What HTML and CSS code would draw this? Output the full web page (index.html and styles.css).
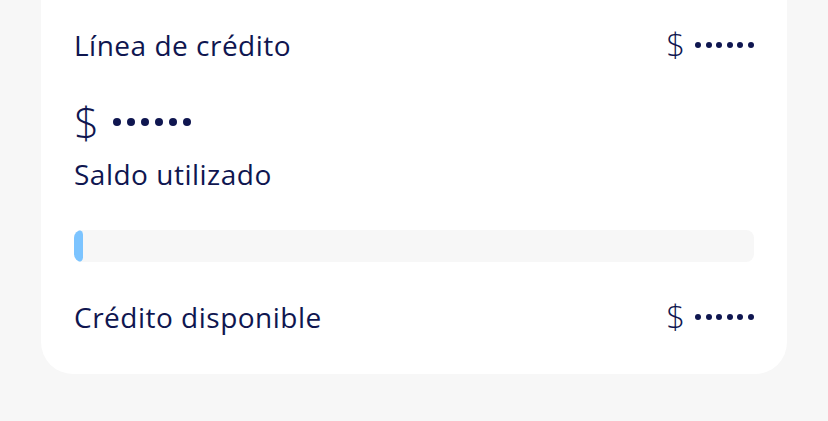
FILE: index.html
```html
<!DOCTYPE html>
<html lang="es">
<head>
    <meta charset="UTF-8">
    <title>Crédito</title>
    <link rel="stylesheet" href="styles.css">
</head>
<body>

<div class="card">
    <div class="row">
        <span>Línea de crédito</span>
        <span class="amount">
            <span class="currency">$</span>
            <span class="dots"><i></i><i></i><i></i><i></i><i></i><i></i></span>
        </span>
    </div>

    <div class="used">
        <div class="amount amount-lg">
            <span class="currency">$</span>
            <span class="dots"><i></i><i></i><i></i><i></i><i></i><i></i></span>
        </div>
        <div>Saldo utilizado</div>
    </div>

    <div class="bar">
        <div class="bar-fill" style="width: 9px"></div>
    </div>

    <div class="row">
        <span>Crédito disponible</span>
        <span class="amount">
            <span class="currency">$</span>
            <span class="dots"><i></i><i></i><i></i><i></i><i></i><i></i></span>
        </span>
    </div>
</div>

</body>
</html>
```

FILE: styles.css
```css
* {
    box-sizing: border-box;
}

body {
    margin: 0;
    background: #f7f7f7;
    font-family: "Open Sans", "Lato", sans-serif;
    font-weight: 400;
    color: #0f1650;
    height: 421px;
    overflow: hidden;
}

.card {
    background: #fff;
    margin: -40px 41px 0;
    padding: 60px 33px 32px;
    border-radius: 0 0 32px 32px;
    display: flex;
    flex-direction: column;
}

.row {
    display: flex;
    justify-content: space-between;
    align-items: center;
    font-size: 28px;
    letter-spacing: 0.5px;
    line-height: 50px;
}

.amount {
    display: flex;
    align-items: center;
    gap: 10px;
}

.currency {
    font-weight: 300;
    font-size: 33px;
    letter-spacing: 0;
}

.dots {
    display: flex;
    gap: 4.6px;
}

.dots i {
    width: 6px;
    height: 6px;
    border-radius: 50%;
    background: #0f1650;
}

.used {
    display: flex;
    flex-direction: column;
    font-size: 28px;
    letter-spacing: 0.5px;
    line-height: 52px;
    margin-top: 26px;
}

.amount-lg {
    gap: 14px;
}

.amount-lg .currency {
    font-size: 44px;
}

.amount-lg .dots {
    gap: 6px;
}

.amount-lg .dots i {
    width: 8px;
    height: 8px;
}

.bar {
    margin: 30px 0 30px;
    height: 32px;
    background: #f7f7f7;
    border-radius: 8px;
    overflow: hidden;
}

.bar-fill {
    height: 100%;
    background: #7cc4ff;
    border-radius: 8px;
}
```
